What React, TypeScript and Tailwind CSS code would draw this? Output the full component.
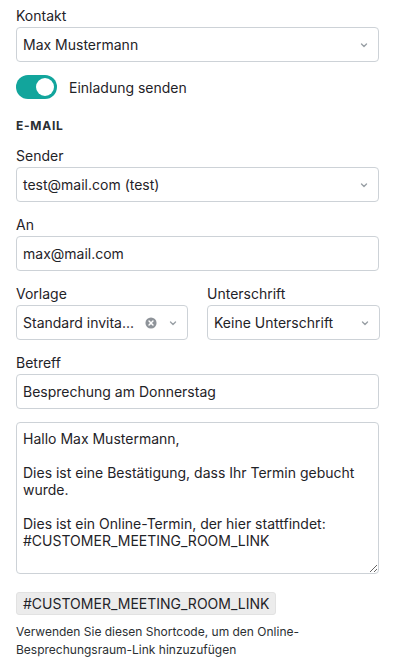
import React, { useState } from 'react';

const Chevron = () => (
  <svg width="10" height="10" viewBox="0 0 10 10" className="shrink-0 text-[#9aa0a6]">
    <path d="M2.5 4 L5 6.5 L7.5 4" fill="none" stroke="currentColor" strokeWidth="1.4" strokeLinecap="round" strokeLinejoin="round" />
  </svg>
);

const ClearIcon = () => (
  <svg width="12" height="12" viewBox="0 0 14 14" className="shrink-0">
    <circle cx="7" cy="7" r="6.5" fill="#8e9399" />
    <path d="M4.7 4.7 L9.3 9.3 M9.3 4.7 L4.7 9.3" stroke="#fff" strokeWidth="1.7" strokeLinecap="round" />
  </svg>
);

function Label({ children }: { children: React.ReactNode }) {
  return <div className="text-[14px] leading-[18px] text-[#1f2328] mb-[2px]">{children}</div>;
}

function Select({ value, clearable }: { value: string; clearable?: boolean }) {
  return (
    <div className="h-[35px] flex items-center pl-[6px] pr-[9px] border border-[#cdd2d7] rounded-[4px] bg-white">
      <span className="flex-1 min-w-0 whitespace-nowrap text-[14px] text-[#1f2328]">{value}</span>
      {clearable && (
        <span className="ml-2">
          <ClearIcon />
        </span>
      )}
      <span className={clearable ? 'ml-[11px]' : 'ml-2'}>
        <Chevron />
      </span>
    </div>
  );
}

function TextInput({ value }: { value: string }) {
  return (
    <div className="h-[35px] flex items-center px-[6px] border border-[#cdd2d7] rounded-[4px] bg-white text-[14px] text-[#1f2328]">
      {value}
    </div>
  );
}

export default function App() {
  const [invite, setInvite] = useState(true);

  return (
    <div className="w-[395px] min-h-[666px] bg-white px-4 pt-[7px] text-[#1f2328]" style={{ fontFamily: 'Inter, "Noto Sans", sans-serif' }}>
      <Label>Kontakt</Label>
      <Select value="Max Mustermann" />

      {/* Einladung toggle */}
      <div className="flex items-center gap-[12px] mt-[13px]">
        <button
          onClick={() => setInvite(!invite)}
          className={`w-[41px] h-[24px] rounded-full flex items-center px-[3px] ${invite ? 'bg-[#12a59c] justify-end' : 'bg-[#cdd2d7] justify-start'}`}
        >
          <span className="w-[18px] h-[18px] rounded-full bg-white" />
        </button>
        <span className="text-[14px]">Einladung senden</span>
      </div>

      <div className="mt-[19px] text-[12px] leading-4 font-bold tracking-[0.06em] text-[#2b2f33]">E-MAIL</div>

      <div className="mt-[13px]">
        <Label>Sender</Label>
        <Select value="test@mail.com (test)" />
      </div>

      <div className="mt-[14px]">
        <Label>An</Label>
        <TextInput value="max@mail.com" />
      </div>

      <div className="mt-[14px] grid grid-cols-[172px_173px] gap-[19px]">
        <div>
          <Label>Vorlage</Label>
          <Select value="Standard invita..." clearable />
        </div>
        <div>
          <Label>Unterschrift</Label>
          <Select value="Keine Unterschrift" />
        </div>
      </div>

      <div className="mt-[14px]">
        <Label>Betreff</Label>
        <TextInput value="Besprechung am Donnerstag" />
      </div>

      <textarea
        readOnly
        className="mt-[13px] block w-full h-[152px] border border-[#cdd2d7] rounded-[4px] px-[6px] pt-[7px] text-[14px] leading-[17px] text-[#1f2328] outline-none resize-y"
        value={'Hallo Max Mustermann,\n\nDies ist eine Bestätigung, dass Ihr Termin gebucht wurde.\n\nDies ist ein Online-Termin, der hier stattfindet:\n#CUSTOMER_MEETING_ROOM_LINK'}
      />

      <div className="mt-[18px] inline-flex items-center h-[23px] px-[6px] rounded-[3px] bg-[#ececec] border border-[#e2e2e2] text-[14px] text-[#1f2328]">
        #CUSTOMER_MEETING_ROOM_LINK
      </div>

      <p className="mt-[8px] text-[12px] leading-[18px] text-[#2b2f33]">
        Verwenden Sie diesen Shortcode, um den Online-Besprechungsraum-Link hinzuzufügen
      </p>
    </div>
  );
}
